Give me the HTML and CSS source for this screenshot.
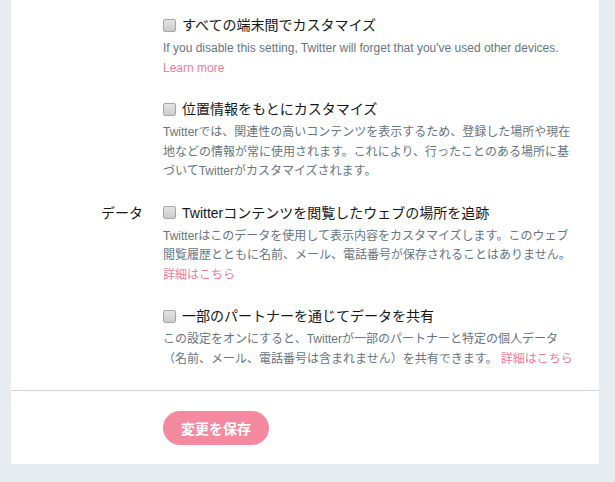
FILE: index.html
```html
<!DOCTYPE html>
<html lang="ja">
<head>
  <meta charset="UTF-8">
  <title>カスタマイズとデータ</title>
  <link rel="stylesheet" href="styles.css">
</head>
<body>
  <div class="panel">
    <div class="settings">
      <div class="setting-row">
        <div class="setting-label"></div>
        <div class="setting-body">
          <label class="check-line">
            <input type="checkbox" class="check">
            <span>すべての端末間でカスタマイズ</span>
          </label>
          <p class="note">If you disable this setting, Twitter will forget that you've used other devices.<br><a href="#" class="link">Learn more</a></p>
        </div>
      </div>

      <div class="setting-row">
        <div class="setting-label"></div>
        <div class="setting-body">
          <label class="check-line">
            <input type="checkbox" class="check">
            <span>位置情報をもとにカスタマイズ</span>
          </label>
          <p class="note">Twitterでは、関連性の高いコンテンツを表示するため、登録した場所や現在地などの情報が常に使用されます。これにより、行ったことのある場所に基づいてTwitterがカスタマイズされます。</p>
        </div>
      </div>

      <div class="setting-row">
        <div class="setting-label">データ</div>
        <div class="setting-body">
          <label class="check-line">
            <input type="checkbox" class="check">
            <span>Twitterコンテンツを閲覧したウェブの場所を追跡</span>
          </label>
          <p class="note">Twitterはこのデータを使用して表示内容をカスタマイズします。このウェブ閲覧履歴とともに名前、メール、電話番号が保存されることはありません。<br><a href="#" class="link">詳細はこちら</a></p>
        </div>
      </div>

      <div class="setting-row">
        <div class="setting-label"></div>
        <div class="setting-body">
          <label class="check-line">
            <input type="checkbox" class="check">
            <span>一部のパートナーを通じてデータを共有</span>
          </label>
          <p class="note">この設定をオンにすると、Twitterが一部のパートナーと特定の個人データ（名前、メール、電話番号は含まれません）を共有できます。 <a href="#" class="link">詳細はこちら</a></p>
        </div>
      </div>
    </div>

    <div class="actions">
      <button class="save-btn">変更を保存</button>
    </div>
  </div>
</body>
</html>
```

FILE: styles.css
```css
body {
  margin: 0;
  background-color: #e6ecf0;
  font-family: "Liberation Sans", "Noto Sans CJK JP", sans-serif;
  color: #14171a;
}

.panel {
  background-color: #fff;
  margin: 0 16px 17px 11px;
}

.settings {
  padding-top: 15px;
}

.setting-row {
  display: grid;
  grid-template-columns: 132px 410px;
  column-gap: 20px;
  padding-bottom: 21px;
}

.setting-label {
  text-align: right;
  font-size: 14px;
  line-height: 20px;
}

.check-line {
  display: flex;
  align-items: center;
  gap: 6px;
  font-size: 14px;
  line-height: 20px;
  margin-bottom: 4px;
}

.check {
  appearance: none;
  -webkit-appearance: none;
  width: 13px;
  height: 13px;
  margin: 0;
  border: 1px solid #a6a6a6;
  border-radius: 2px;
  background: linear-gradient(#e4e4e4, #cbcbcb);
  flex: none;
}

.note {
  margin: 0;
  font-size: 12px;
  line-height: 19.5px;
  color: #66757f;
}

.link {
  color: #f27a9b;
  text-decoration: none;
  white-space: nowrap;
}

.actions {
  border-top: 1px solid #ccd6dd;
  padding: 20px 0 19px 152px;
}

.save-btn {
  height: 34px;
  padding: 0 18px;
  border: none;
  border-radius: 17px;
  background-color: #f5899f;
  color: #fff;
  font-family: "Liberation Sans", "Noto Sans CJK JP", sans-serif;
  font-size: 14px;
  font-weight: bold;
  cursor: pointer;
}
```
